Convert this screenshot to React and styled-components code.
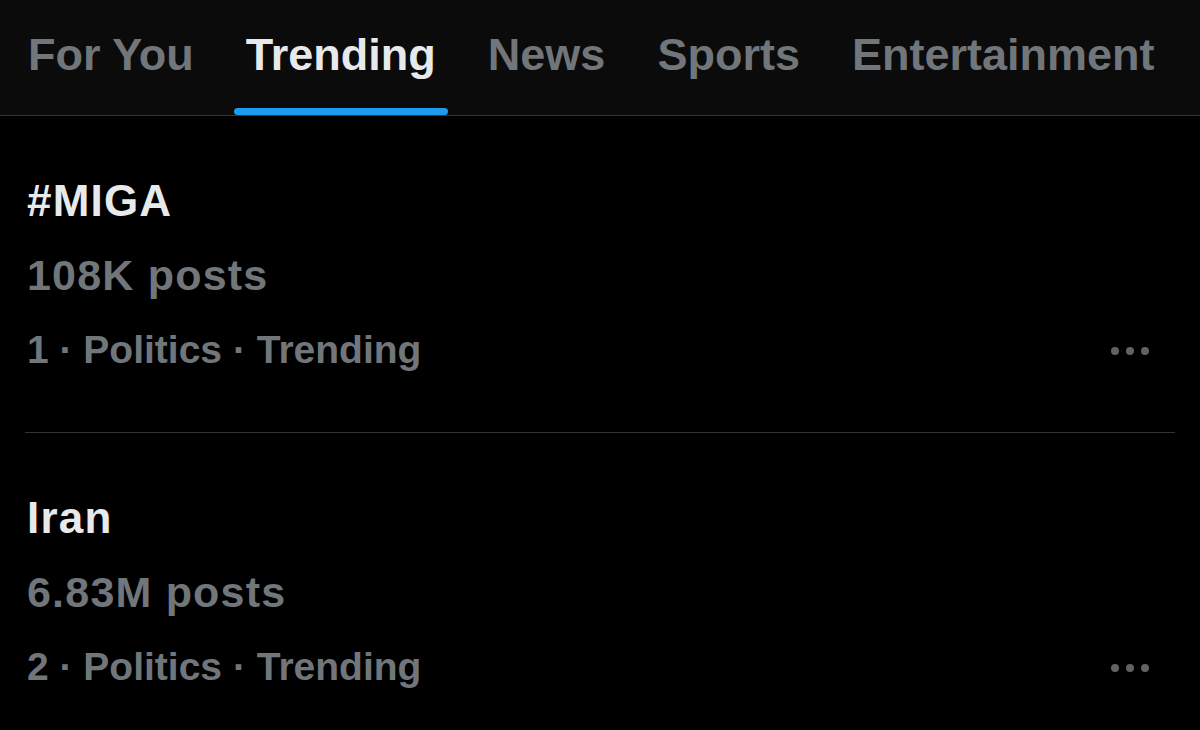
import React from "react";
import styled, { createGlobalStyle } from "styled-components";

const Global = createGlobalStyle`
  html, body { margin: 0; padding: 0; background: #000; }
  body { font-family: "Liberation Sans", Arial, sans-serif; -webkit-font-smoothing: antialiased; }
  * { box-sizing: border-box; }
`;

const Page = styled.div`
  width: 1200px;
  height: 730px;
  background: #000;
  overflow: hidden;
`;

const TabBar = styled.nav`
  display: flex;
  gap: 28px;
  height: 116px;
  padding-left: 16px;
  background: #0b0b0c;
  border-bottom: 1px solid #323436;
`;

const Tab = styled.div`
  position: relative;
  padding: 32px 12px 0;
  font-size: 45px;
  line-height: 45px;
  font-weight: 700;
  white-space: nowrap;
  color: ${(p) => (p.$active ? "#e7e9ea" : "#71767b")};
`;

const Indicator = styled.span`
  position: absolute;
  left: 0;
  right: 0;
  bottom: 0;
  height: 7px;
  border-radius: 4px;
  background: #1d9bf0;
`;

const List = styled.div`
  display: flex;
  flex-direction: column;
`;

const Trend = styled.div`
  margin: 0 25px;
  padding: 47px 0 45px 2px;
  border-bottom: 1px solid #2f3336;
  display: flex;
  flex-direction: column;
`;

const Title = styled.div`
  font-size: 44px;
  line-height: 75px;
  font-weight: 700;
  letter-spacing: 1.2px;
  color: #e7e9ea;
`;

const Posts = styled.div`
  font-size: 43px;
  line-height: 75px;
  font-weight: 700;
  letter-spacing: 1.2px;
  color: #71767b;
`;

const MetaRow = styled.div`
  display: flex;
  align-items: center;
  justify-content: space-between;
  padding-right: 26px;
`;

const Meta = styled.div`
  font-size: 39px;
  line-height: 74px;
  font-weight: 700;
  color: #71767b;
  white-space: pre;
`;

const More = styled.div`
  display: flex;
  gap: 7px;
  margin-top: 2px;
`;

const Dot = styled.span`
  width: 8px;
  height: 8px;
  border-radius: 50%;
  background: #5f6368;
`;

const tabs = ["For You", "Trending", "News", "Sports", "Entertainment"];

const trends = [
  { title: "#MIGA", posts: "108K posts", rank: 1, cat: "Politics" },
  { title: "Iran", posts: "6.83M posts", rank: 2, cat: "Politics" },
];

export default function App() {
  return (
    <Page>
      <Global />
      <TabBar>
        {tabs.map((t) => (
          <Tab key={t} $active={t === "Trending"}>
            {t}
            {t === "Trending" && <Indicator />}
          </Tab>
        ))}
      </TabBar>
      <List>
        {trends.map((tr) => (
          <Trend key={tr.title}>
            <Title>{tr.title}</Title>
            <Posts>{tr.posts}</Posts>
            <MetaRow>
              <Meta>{`${tr.rank} · ${tr.cat} · Trending`}</Meta>
              <More>
                <Dot />
                <Dot />
                <Dot />
              </More>
            </MetaRow>
          </Trend>
        ))}
      </List>
    </Page>
  );
}
